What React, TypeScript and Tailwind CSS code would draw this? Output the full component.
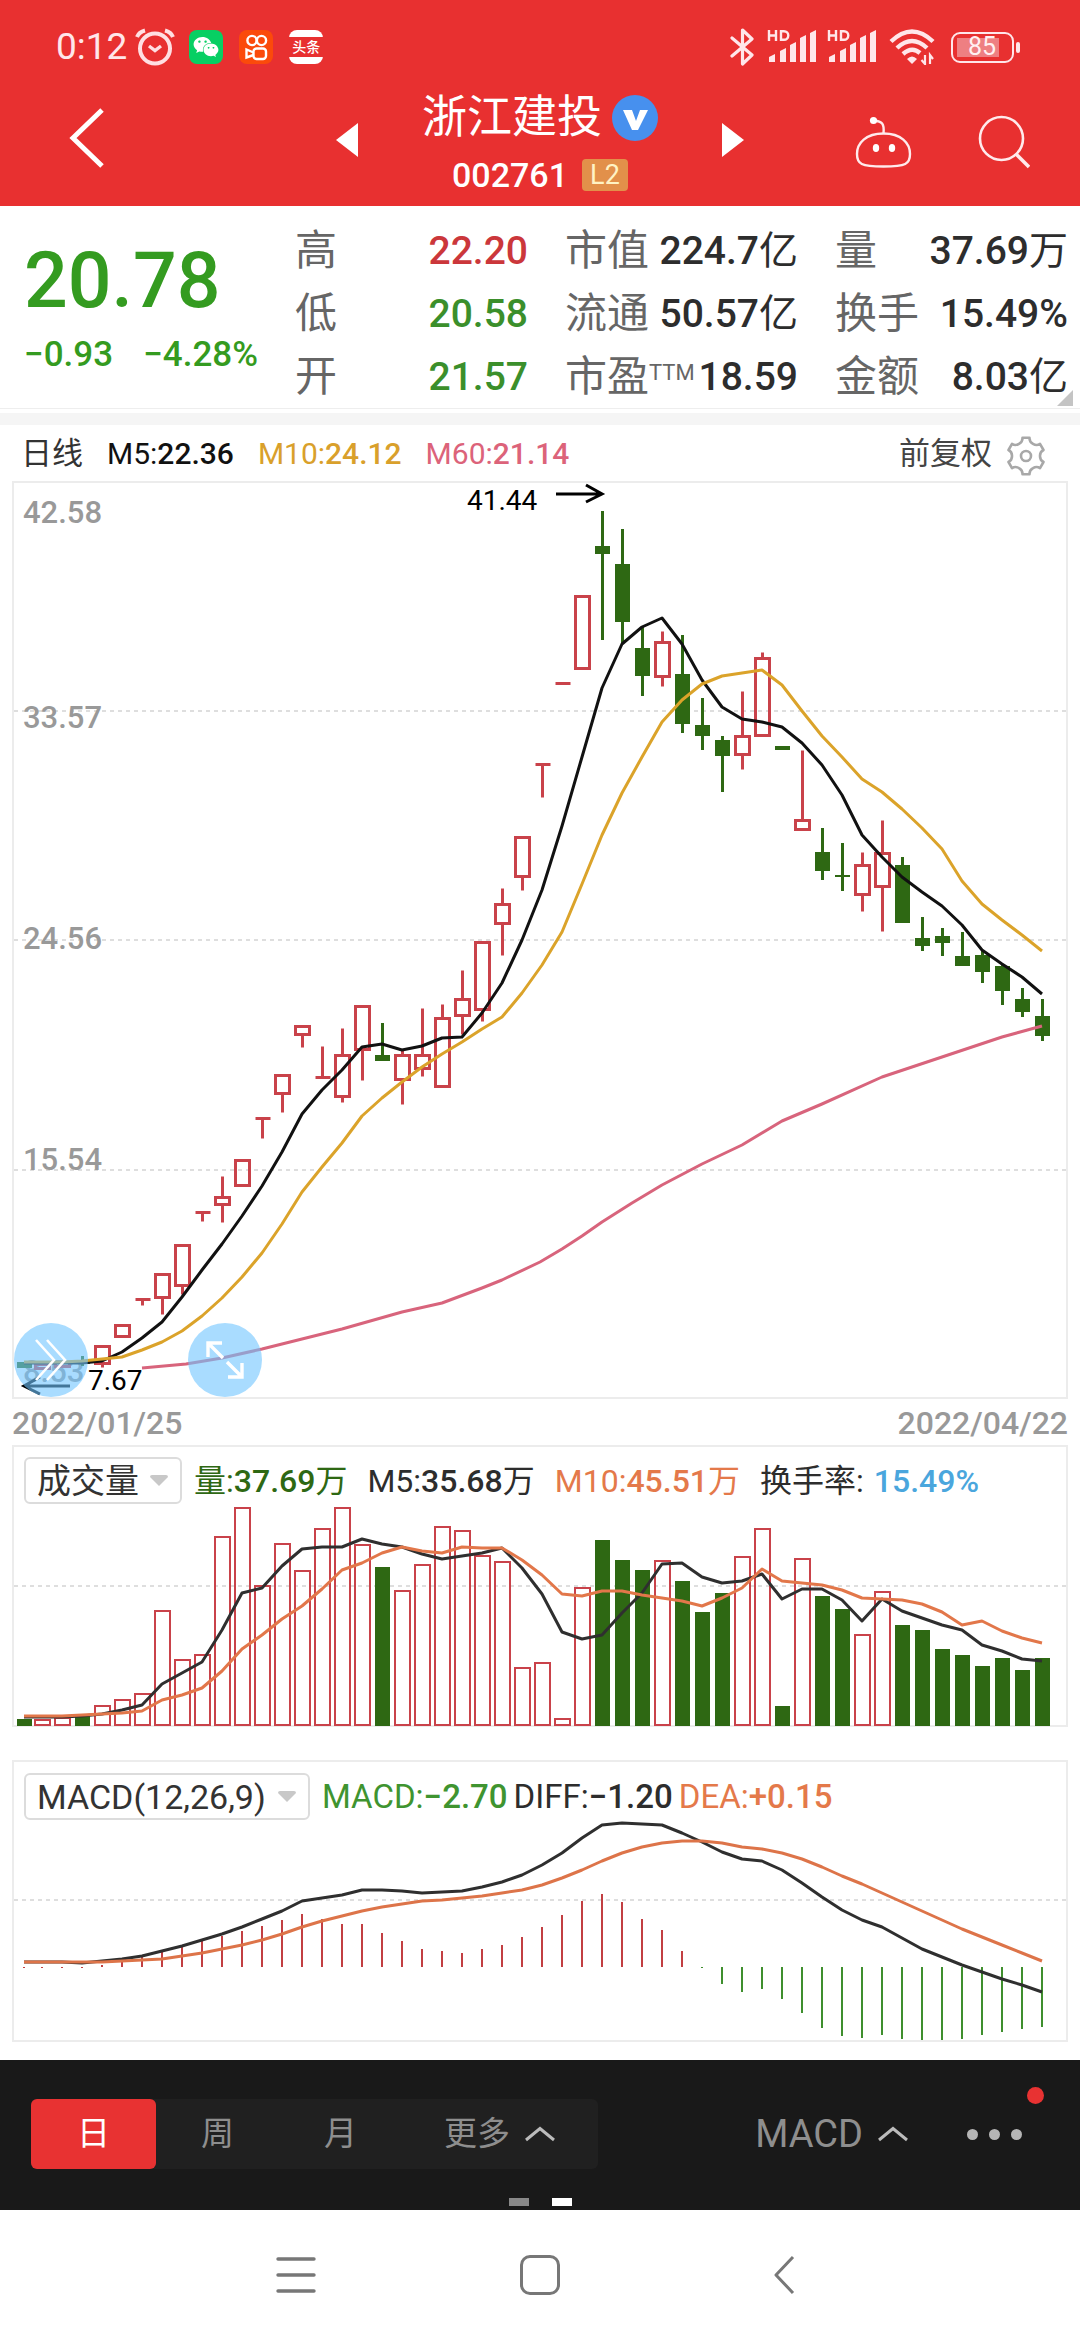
import React from "react";
import { FaWeixin } from "react-icons/fa";

type Candle = [kind: "r" | "g", high: number, top: number, bottom: number, low: number];

const candles: Candle[] = [
  ["g", 1362, 1362, 1368, 1368],
  ["r", 1364, 1364, 1368, 1368],
  ["r", 1361, 1362, 1366, 1367],
  ["g", 1356, 1360, 1364, 1366],
  ["r", 1346, 1346, 1363, 1367],
  ["r", 1325, 1325, 1336, 1336],
  ["r", 1299, 1299, 1299, 1305],
  ["r", 1274, 1274, 1297, 1314],
  ["r", 1245, 1245, 1285, 1294],
  ["r", 1212, 1212, 1212, 1221],
  ["r", 1176, 1197, 1204, 1222],
  ["r", 1160, 1160, 1185, 1185],
  ["r", 1118, 1118, 1118, 1138],
  ["r", 1075, 1075, 1093, 1112],
  ["r", 1026, 1026, 1034, 1047],
  ["r", 1046, 1077, 1078, 1078],
  ["r", 1028, 1055, 1096, 1102],
  ["r", 1006, 1006, 1049, 1080],
  ["g", 1023, 1055, 1061, 1061],
  ["r", 1050, 1055, 1079, 1104],
  ["r", 1008, 1055, 1068, 1076],
  ["r", 1004, 1018, 1086, 1086],
  ["r", 970, 999, 1015, 1034],
  ["r", 942, 942, 1009, 1021],
  ["r", 888, 904, 923, 955],
  ["r", 837, 837, 876, 890],
  ["r", 764, 764, 764, 797],
  ["r", 683, 683, 683, 683],
  ["r", 596, 596, 668, 668],
  ["g", 511, 546, 554, 640],
  ["g", 529, 564, 622, 644],
  ["g", 626, 648, 676, 696],
  ["r", 631, 642, 676, 686],
  ["g", 635, 674, 724, 733],
  ["g", 698, 725, 736, 750],
  ["g", 736, 740, 756, 792],
  ["r", 691, 736, 754, 769],
  ["r", 652, 658, 735, 735],
  ["g", 746, 746, 750, 750],
  ["r", 750, 820, 829, 829],
  ["g", 828, 852, 871, 880],
  ["g", 843, 875, 877, 891],
  ["r", 852, 865, 894, 911],
  ["r", 820, 853, 886, 931],
  ["g", 857, 865, 923, 923],
  ["g", 917, 938, 946, 951],
  ["g", 928, 936, 943, 956],
  ["g", 932, 956, 966, 966],
  ["g", 951, 955, 972, 983],
  ["g", 964, 966, 991, 1005],
  ["g", 988, 999, 1012, 1017],
  ["g", 999, 1016, 1036, 1041],
];

const ma5 = [
  1363, 1363, 1363, 1363, 1361, 1352, 1338, 1322, 1297, 1270, 1244, 1216, 1186, 1152, 1114, 1090, 1070, 1047, 1044,
  1050, 1046, 1038, 1037, 1013, 983, 940, 890, 826, 757, 688, 644, 627, 618, 644, 680, 707, 719, 722, 727, 743, 765,
  795, 835, 857, 877, 892, 906, 925, 950, 964, 977, 994,
];
const ma10 = [
  1362, 1362, 1362, 1361, 1359, 1357, 1350, 1342, 1331, 1316, 1298, 1277, 1253, 1224, 1192, 1167, 1143, 1116, 1098,
  1082, 1067, 1054, 1042, 1029, 1017, 993, 965, 932, 884, 835, 793, 757, 722, 700, 684, 676, 673, 670, 685, 711, 736,
  757, 779, 792, 809, 828, 849, 881, 904, 920, 935, 951,
];
const ma60 =
  "142,1368 186,1364 222,1358 262,1349 302,1339 342,1329 402,1312 442,1303 482,1288 502,1280 540,1262 562,1249 582,1236 602,1222 632,1203 662,1185 702,1164 742,1145 782,1121 822,1104 882,1077 942,1057 1002,1037 1042,1026";

const volumes = [
  1719, 1719, 1717, 1716, 1705, 1699, 1693, 1610, 1659, 1654, 1536, 1507, 1585, 1543, 1570, 1528, 1507, 1544, 1567,
  1590, 1564, 1526, 1530, 1555, 1561, 1667, 1662, 1718, 1587, 1540, 1560, 1570, 1560, 1581, 1612, 1593, 1556, 1528,
  1706, 1558, 1596, 1609, 1634, 1591, 1625, 1630, 1649, 1655, 1666, 1658, 1670, 1658,
];
const volMa5 = [
  1717, 1717, 1717, 1716, 1714, 1710, 1705, 1684, 1673, 1662, 1630, 1593, 1588, 1566, 1549, 1547, 1547, 1539, 1544,
  1547, 1554, 1559, 1556, 1553, 1548, 1568, 1594, 1632, 1639, 1635, 1613, 1593, 1564, 1563, 1577, 1583, 1581, 1574,
  1599, 1589, 1589, 1600, 1621, 1599, 1611, 1618, 1625, 1630, 1645, 1651, 1659, 1661,
];
const volMa10 = [
  1716, 1716, 1716, 1715, 1714, 1713, 1711, 1700, 1695, 1688, 1671, 1649, 1635, 1619, 1606, 1589, 1570, 1563, 1553,
  1547, 1551, 1553, 1547, 1548, 1548, 1560, 1575, 1594, 1596, 1591, 1591, 1595, 1598, 1601, 1606, 1598, 1588, 1569,
  1581, 1583, 1585, 1590, 1598, 1599, 1600, 1604, 1612, 1625, 1621, 1631, 1638, 1643,
];

const macdBars = [
  1968, 1968, 1968, 1968, 1965, 1960, 1957, 1952, 1947, 1940, 1936, 1931, 1926, 1920, 1914, 1919, 1924, 1924, 1933,
  1941, 1949, 1951, 1953, 1949, 1945, 1937, 1927, 1915, 1901, 1894, 1902, 1919, 1930, 1951, 1968, 1984, 1992, 1989,
  1999, 2013, 2028, 2036, 2038, 2035, 2039, 2040, 2040, 2039, 2035, 2032, 2029, 2027,
];
const diff = [
  1962, 1962, 1962, 1963, 1961, 1959, 1956, 1951, 1946, 1940, 1934, 1927, 1919, 1911, 1901, 1898, 1895, 1890, 1890,
  1891, 1893, 1892, 1891, 1887, 1882, 1875, 1865, 1853, 1838, 1825, 1823, 1824, 1825, 1833, 1842, 1852, 1859, 1861,
  1870, 1883, 1897, 1910, 1920, 1927, 1938, 1949, 1957, 1965, 1972, 1979, 1985, 1992,
];
const dea = [
  1962, 1962, 1962, 1962, 1962, 1961, 1960, 1959, 1956, 1953, 1949, 1945, 1940, 1934, 1927, 1921, 1916, 1911, 1907,
  1904, 1901, 1900, 1898, 1896, 1893, 1890, 1885, 1878, 1870, 1861, 1853, 1847, 1843, 1841, 1841, 1843, 1847, 1849,
  1853, 1859, 1867, 1876, 1884, 1893, 1902, 1911, 1920, 1929, 1937, 1945, 1953, 1961,
];

const RED = "#c9424a";
const GREEN = "#2e6813";

const xAt = (i: number) => (i === 0 ? 24 : 22 + 20 * i);
const line = (ys: number[]) => ys.map((y, i) => `${xAt(i)},${y}`).join(" ");

function Grid({ y }: { y: number }) {
  return <path d={`M14 ${y}H1066`} stroke="#dedede" strokeWidth="2" strokeDasharray="4 4" />;
}

function CandleShape({ c, i }: { c: Candle; i: number }) {
  const [kind, high, top, bottom, low] = c;
  const x = xAt(i);
  if (kind === "g") {
    return (
      <g fill={GREEN}>
        <rect x={x - 1} y={high} width="3" height={low - high} />
        <rect x={x - 7} y={top} width="15" height={bottom - top} />
      </g>
    );
  }
  return (
    <g stroke={RED} strokeWidth="3" fill="none" transform="translate(0.5 0.5)">
      {high < top && <path d={`M${x} ${high}V${top}`} />}
      {low > bottom && <path d={`M${x} ${bottom}V${low}`} />}
      {bottom - top < 3 ? (
        <path d={`M${x - 7} ${top}H${x + 8}`} />
      ) : (
        <rect x={x - 7} y={top} width="14" height={bottom - top} />
      )}
    </g>
  );
}

function PriceChart() {
  return (
    <svg viewBox="14 483 1052 914" className="block w-full overflow-visible" role="img" aria-label="日线">
      <Grid y={711} />
      <Grid y={940} />
      <Grid y={1170} />
      <g className="font-['Roboto'] text-[31px] font-medium" fill="#999">
        <text x="23" y="523">42.58</text>
        <text x="23" y="728">33.57</text>
        <text x="23" y="949">24.56</text>
        <text x="23" y="1170">15.54</text>
        <text x="23" y="1382">8.53</text>
      </g>
      {candles.map((c, i) => (
        <CandleShape key={i} c={c} i={i} />
      ))}
      <g fill="none" strokeWidth="3" strokeLinejoin="round">
        <polyline points={ma60} stroke="#d8647c" />
        <polyline points={line(ma5)} stroke="#111" />
        <polyline points={line(ma10)} stroke="#dba32a" />
      </g>
      <g className="font-['Roboto'] text-[28px]" fill="#000">
        <text x="467" y="510">41.44</text>
        <text x="88" y="1390">7.67</text>
      </g>
      <g fill="none" stroke="#000" strokeWidth="3">
        <path d="M556 494H602M586 485L602 494L586 502" />
        <path d="M70 1386H24M40 1377L24 1386L40 1394" />
      </g>
    </svg>
  );
}

function VolumeChart() {
  return (
    <svg viewBox="14 1504 1052 221" className="block w-full overflow-visible" role="img" aria-label="成交量">
      <Grid y={1586} />
      {volumes.map((top, i) =>
        candles[i][0] === "g" ? (
          <rect key={i} x={xAt(i) - 7} y={top} width="15" height={1726 - top} fill={GREEN} />
        ) : (
          <rect
            key={i}
            x={xAt(i) - 7}
            y={top + 1}
            width="15"
            height={1724 - top}
            fill="none"
            stroke={RED}
            strokeWidth="2"
          />
        ),
      )}
      <g fill="none" strokeWidth="3" strokeLinejoin="round">
        <polyline points={line(volMa5)} stroke="#2f2f2f" />
        <polyline points={line(volMa10)} stroke="#e2774a" />
      </g>
    </svg>
  );
}

function MacdChart() {
  return (
    <svg viewBox="14 1821 1052 219" className="block w-full" role="img" aria-label="MACD">
      <Grid y={1900} />
      {macdBars.map((y, i) => (
        <path key={i} d={`M${xAt(i)} 1967V${y}`} stroke={i < 34 ? "#c23f42" : "#3f8f2e"} strokeWidth="2" />
      ))}
      <g fill="none" strokeWidth="3" strokeLinejoin="round">
        <polyline points={line(diff)} stroke="#2f2f2f" />
        <polyline points={line(dea)} stroke="#dd7449" />
      </g>
    </svg>
  );
}

function Signal() {
  return (
    <svg width="50" height="34" viewBox="0 0 50 34" fill="#ffe6ea" aria-hidden="true">
      <path d="M2 0V11M2 5.500H9M9 0V11" stroke="#ffe6ea" strokeWidth="2.400" />
      <path d="M14 1.200V9.800H17A4.300 4.300 0 0 0 17 1.200Z" fill="none" stroke="#ffe6ea" strokeWidth="2.400" />
      <path d="M2 32V27L8 24V32Z" />
      <path d="M13 32V21L19 18V32Z" />
      <path d="M23 32V15L29 12V32Z" />
      <path d="M33 32V8L39 5V32Z" />
      <path d="M43 32V3L49 0V32Z" />
    </svg>
  );
}

function StatusBar() {
  return (
    <div className="flex h-[66px] items-center justify-between pt-7 pl-14 pr-[60px] text-white">
      <div className="flex items-center">
        <span className="text-[37px] leading-9 text-[#ffe6ea]">0:12</span>
        <svg className="ml-2" width="40" height="38" viewBox="0 0 40 38" fill="none" stroke="#ffdfe2" strokeWidth="4" aria-hidden="true">
          <circle cx="20" cy="20.500" r="15" />
          <path d="M14 18L20 22.500L26 18" strokeWidth="3.400" />
          <path d="M2 9Q4 4 10 2.500M38 9Q36 4 30 2.500" />
        </svg>
        <span className="ml-3.5 flex size-[34px] items-center justify-center rounded-lg bg-[#07cf63]">
          <FaWeixin className="size-[26px]" />
        </span>
        <span className="ml-4 flex size-[34px] items-center justify-center rounded-lg bg-[#fb4a0b]">
          <svg width="24" height="27" viewBox="0 0 24 27" fill="none" stroke="#fff" strokeWidth="2.400" aria-hidden="true">
            <circle cx="8" cy="6.500" r="4.600" />
            <circle cx="17.500" cy="6.500" r="4.600" />
            <rect x="9.500" y="14.500" width="12.500" height="10.500" rx="3" />
            <path d="M9.500 18.500L2.500 15.500V23.500L9.500 21" />
          </svg>
        </span>
        <span className="ml-4 flex h-[34px] w-[34px] flex-col items-center justify-between overflow-hidden rounded-lg">
          <span className="h-[7px] w-full bg-white" />
          <span className="text-[14px] leading-[14px] font-medium">头条</span>
          <span className="h-[7px] w-full bg-white" />
        </span>
      </div>
      <div className="flex items-center">
        <svg width="25" height="40" viewBox="0 0 25 40" fill="none" stroke="#ffe6ea" strokeWidth="3.200" strokeLinejoin="round" strokeLinecap="round" aria-hidden="true">
          <path d="M2 11L22 28L12.500 37V3L22 12L2 29" />
        </svg>
        <span className="ml-3">
          <Signal />
        </span>
        <span className="ml-2.5">
          <Signal />
        </span>
        <svg className="ml-3" width="46" height="36" viewBox="0 0 46 36" fill="none" stroke="#ffe6ea" strokeWidth="4.400" aria-hidden="true">
          <path d="M2 12.500Q23 -7.500 44 12.500" />
          <path d="M8 19Q23 5 38 19" />
          <path d="M14 25Q23 17 31 24" />
          <path d="M18 30Q23 25 28 30L23 35Z" fill="#ffe6ea" stroke="none" />
          <path d="M36 26V35L32.500 31M41 35V26L44 30" strokeWidth="2.200" />
        </svg>
        <span className="ml-4 flex h-[31px] w-[63px] rounded-[9px] border-2 border-[#ffe6ea] p-1">
          <span className="flex h-full w-[42px] items-center justify-center bg-[#ee7f82]">
            <span className="pl-2 text-[25px] leading-6 text-[#fff0f2]">85</span>
          </span>
        </span>
        <span className="ml-0.5 h-[11px] w-1 rounded-sm bg-[#ffe6ea]" />
      </div>
    </div>
  );
}

function TitleBar() {
  return (
    <div className="grid h-[140px] grid-cols-[1fr_auto_1fr] items-center pt-1 text-white">
      <div className="pl-[68px]">
        <button type="button" aria-label="返回" className="block">
          <svg width="38" height="60" viewBox="0 0 38 60" fill="none" stroke="#fff" strokeWidth="5">
            <path d="M34 2L5 30L34 58" />
          </svg>
        </button>
      </div>
      <div className="flex w-[408px] items-center justify-between pt-1">
        <button type="button" aria-label="上一只" className="block">
          <svg width="22" height="34" viewBox="0 0 22 34" fill="#fff">
            <path d="M22 0V34L0 17Z" />
          </svg>
        </button>
        <div className="flex flex-col items-center gap-4 pt-1">
          <h1 className="flex items-center gap-2.5 text-[45px] leading-[50px]">
            浙江建投
            <svg width="46" height="46" viewBox="0 0 46 46" aria-label="认证">
              <circle cx="23" cy="23" r="23" fill="#4790ee" />
              <path d="M11 15H20L24 26L28 15H36L26 35H20Z" fill="#fff" />
            </svg>
          </h1>
          <p className="flex items-center gap-3.5 text-[34px] leading-8 font-medium">
            002761
            <span className="flex h-8 w-[46px] items-center justify-center rounded-sm bg-[#e2904a] text-[27px] leading-8 font-normal text-[#fff3c4]">
              L2
            </span>
          </p>
        </div>
        <button type="button" aria-label="下一只" className="block">
          <svg width="22" height="34" viewBox="0 0 22 34" fill="#fff">
            <path d="M0 0V34L22 17Z" />
          </svg>
        </button>
      </div>
      <div className="flex items-center justify-end gap-[66px] pt-2 pr-[50px]">
        <button type="button" aria-label="智能助手">
          <svg className="block" width="57" height="54" viewBox="0 0 57 54" fill="none" stroke="#ffeaec" strokeWidth="2.400">
            <path d="M28.500 18.500C46 18.500 55 28 55 39C55 49 51 51.500 28.500 51.500C6 51.500 2 49 2 39C2 28 11 18.500 28.500 18.500Z" />
            <path d="M28.500 18.500C29.500 8 27 6.500 19 5.500" />
            <circle cx="18.500" cy="5.500" r="3.600" fill="#fff" stroke="none" />
            <ellipse cx="21" cy="33" rx="3.200" ry="4" fill="#fff" stroke="none" />
            <ellipse cx="37" cy="33" rx="3.200" ry="4" fill="#fff" stroke="none" />
          </svg>
        </button>
        <button type="button" aria-label="搜索">
          <svg className="block" width="52" height="54" viewBox="0 0 52 54" fill="none" stroke="#ffeaec" strokeWidth="2.600">
            <circle cx="23.500" cy="23.500" r="21.500" />
            <path d="M38 39L51 52" strokeWidth="3.600" />
          </svg>
        </button>
      </div>
    </div>
  );
}

function Value({ children, className }: { children: string; className: string }) {
  const unit = /[万亿]$/.test(children) ? children.slice(-1) : "";
  const digits = unit ? children.slice(0, -1) : children;
  return (
    <dd className={className}>
      <span className="font-medium">{digits}</span>
      {unit}
    </dd>
  );
}

const quoteColumns = [
  [
    { label: "高", value: "22.20", color: "text-[#cb373b]" },
    { label: "低", value: "20.58", color: "text-[#3b8f2b]" },
    { label: "开", value: "21.57", color: "text-[#3b8f2b]" },
  ],
  [
    { label: "市值", value: "224.7亿", color: "text-[#2d2d2d]" },
    { label: "流通", value: "50.57亿", color: "text-[#2d2d2d]" },
    { label: "市盈", sup: "TTM", value: "18.59", color: "text-[#2d2d2d]" },
  ],
  [
    { label: "量", value: "37.69万", color: "text-[#2d2d2d]" },
    { label: "换手", value: "15.49%", color: "text-[#2d2d2d]" },
    { label: "金额", value: "8.03亿", color: "text-[#2d2d2d]" },
  ],
];

function Quote() {
  return (
    <section className="relative grid grid-cols-[234px_1fr_1fr_1fr] gap-x-[37px] border-b border-[#eee] pt-[13px] pr-3 pl-6">
      <div className="flex flex-col pt-[22px] text-[#349b20]">
        <span className="text-[77px] leading-[80px] font-medium">20.78</span>
        <span className="flex items-center justify-between pt-3 text-[35px] leading-[44px] font-medium">
          <span>−0.93</span>
          <span>−4.28%</span>
        </span>
      </div>
      {quoteColumns.map((rows, i) => (
        <dl key={i}>
          {rows.map((row) => (
            <div key={row.label} className="flex h-[63px] items-center justify-between leading-[48px] whitespace-nowrap">
              <dt className="text-[42px] text-[#666]">
                {row.label}
                {"sup" in row && <sup className="text-[22px] leading-none">{row.sup}</sup>}
              </dt>
              <Value className={`text-[39px] ${row.color}`}>{row.value}</Value>
            </div>
          ))}
        </dl>
      ))}
      <svg className="absolute right-[7px] bottom-0.5" width="16" height="16" viewBox="0 0 16 16" fill="#c4c4c4" aria-hidden="true">
        <path d="M16 0V16H0Z" />
      </svg>
    </section>
  );
}

function gearPath() {
  const at = (r: number, deg: number) => {
    const a = (deg * Math.PI) / 180;
    return `${(20 + r * Math.cos(a)).toFixed(1)} ${(20 + r * Math.sin(a)).toFixed(1)}`;
  };
  const parts: string[] = [];
  for (let k = 0; k < 6; k++) {
    const a = 60 * k - 90;
    parts.push(`${k === 0 ? "M" : "L"}${at(18.5, a - 11)}L${at(18.5, a + 11)}Q${at(14.5, a + 13)} ${at(14, a + 30)}Q${at(14.5, a + 47)} ${at(18.5, a + 49)}`);
  }
  return parts.join("") + "Z";
}

function Tag({ name, value, unit, className }: { name: string; value: string; unit?: string; className: string }) {
  return (
    <span className={className}>
      {name}:<span className="font-medium">{value}</span>
      {unit}
    </span>
  );
}

function AverageRow() {
  return (
    <div className="flex h-14 items-center justify-between pt-0.5 pr-[34px] pl-[21px] text-[31px] leading-10 whitespace-nowrap">
      <div className="flex items-center gap-6">
        <span className="text-[#333]">日线</span>
        <span className="flex items-center gap-6 text-[30px]">
          <Tag name="M5" value="22.36" className="text-[#111]" />
          <Tag name="M10" value="24.12" className="text-[#d9a02b]" />
          <Tag name="M60" value="21.14" className="text-[#dc637a]" />
        </span>
      </div>
      <div className="flex items-center gap-3.5">
        <button type="button" className="text-[#444]">前复权</button>
        <button type="button" aria-label="设置">
          <svg className="mt-1 block" width="40" height="40" viewBox="0 0 40 40" fill="none" stroke="#a8a8a8" strokeWidth="2.600" strokeLinejoin="round">
            <path d={gearPath()} />
            <circle cx="20" cy="20" r="5" />
          </svg>
        </button>
      </div>
    </div>
  );
}

function IndicatorSelect({ value, label, className }: { value: string; label: string; className: string }) {
  return (
    <div className="relative flex items-center">
      <select
        aria-label={label}
        className={`h-[47px] appearance-none rounded-md border-2 border-[#dcdcdc] bg-white pl-[11px] text-[34px] leading-10 text-[#333] ${className}`}
      >
        <option>{value}</option>
      </select>
      <svg className="pointer-events-none absolute right-3.5" width="18" height="11" viewBox="0 0 18 11" fill="#c8c8c8" aria-hidden="true">
        <path d="M0 2Q0 0 2 0H16Q18 0 18 2L9 11Z" />
      </svg>
    </div>
  );
}

function BottomBar() {
  const chevron = (
    <svg width="32" height="16" viewBox="0 0 32 16" fill="none" stroke="#bbb" strokeWidth="3" aria-hidden="true">
      <path d="M2 14L16 2.500L30 14" />
    </svg>
  );
  return (
    <section className="relative flex h-[150px] flex-col bg-[#191919] pt-[39px] text-[33px] leading-10 text-[#8e8e8e]">
      <div className="flex h-[70px] items-center justify-between pr-[58px] pl-[31px]">
        <div className="flex h-full rounded-md bg-[#202020]">
          <button type="button" className="h-full w-[125px] rounded-md bg-[#e83232] text-white">日</button>
          <button type="button" className="h-full w-[123px]">周</button>
          <button type="button" className="h-full w-[123px]">月</button>
          <button type="button" className="flex h-full w-[196px] items-center justify-center gap-3.5">
            更多
            {chevron}
          </button>
        </div>
        <div className="flex items-center gap-[58px]">
          <button type="button" className="flex items-center gap-3.5 text-[38px]">
            MACD
            {chevron}
          </button>
          <button type="button" aria-label="更多选项" className="flex items-center gap-[11px]">
            <span className="size-[11px] rounded-full bg-[#b5b5b5]" />
            <span className="size-[11px] rounded-full bg-[#b5b5b5]" />
            <span className="size-[11px] rounded-full bg-[#b5b5b5]" />
          </button>
        </div>
      </div>
      <div className="mt-[29px] flex justify-center gap-[23px]">
        <span className="h-2 w-5 bg-[#888]" />
        <span className="h-2 w-5 bg-white" />
      </div>
      <span className="absolute top-[27px] right-9 size-[17px] rounded-full bg-[#e83232]" />
    </section>
  );
}

function SystemNav() {
  return (
    <nav className="flex h-[130px] justify-center bg-white">
      <button type="button" aria-label="最近任务" className="flex w-[244px] items-center justify-center">
        <svg width="40" height="38" viewBox="0 0 40 38" stroke="#777" strokeWidth="3.400" strokeLinecap="round">
          <path d="M2 3H38M2 19H38M2 35H38" />
        </svg>
      </button>
      <button type="button" aria-label="主屏幕" className="flex w-[244px] items-center justify-center">
        <span className="size-10 rounded-[10px] border-[3px] border-[#777]" />
      </button>
      <button type="button" aria-label="返回上级" className="flex w-[244px] items-center justify-center">
        <svg width="22" height="40" viewBox="0 0 22 40" fill="none" stroke="#777" strokeWidth="3" strokeLinejoin="round">
          <path d="M20 2L3 20L20 38" />
        </svg>
      </button>
    </nav>
  );
}

export default function App() {
  return (
    <div className="bg-white font-['Roboto','Noto_Sans_CJK_SC',sans-serif]">
      <header className="bg-[#e83030]">
        <StatusBar />
        <TitleBar />
      </header>
      <main>
        <Quote />
        <div className="mt-1 h-3 bg-[#f5f5f5]" />
        <AverageRow />
        <section className="relative mx-3 border-2 border-[#ececec]">
          <PriceChart />
          <button type="button" aria-label="展开" className="absolute bottom-0 left-0 flex size-[74px] items-center justify-center rounded-full bg-[#6fc4ff]/60">
            <svg width="36" height="42" viewBox="0 0 36 42" fill="none" stroke="#fff" strokeWidth="2.600">
              <path d="M3 1L21 21L3 41M14 1L32 21L14 41" />
            </svg>
          </button>
          <button type="button" aria-label="全屏" className="absolute bottom-0 left-[174px] flex size-[74px] items-center justify-center rounded-full bg-[#6fc4ff]/60">
            <svg width="38" height="38" viewBox="0 0 38 38" fill="none" stroke="#fff" strokeWidth="3.400">
              <path d="M16 2H2V16M2 2L17 17M22 36H36V22M36 36L21 21" />
            </svg>
          </button>
        </section>
        <div className="flex h-[46px] items-center justify-between px-3 pt-0.5 text-[32px] leading-10 font-medium text-[#999]">
          <time>2022/01/25</time>
          <time>2022/04/22</time>
        </div>
        <section className="mx-3 border-2 border-[#ececec]">
          <div className="flex h-[57px] items-center gap-5 pt-2.5 pl-2.5 text-[32px] leading-10 whitespace-nowrap">
            <div className="-mr-2">
              <IndicatorSelect label="副图指标一" value="成交量" className="w-[158px]" />
            </div>
            <Tag name="量" value="37.69" unit="万" className="text-[#2e6813]" />
            <Tag name="M5" value="35.68" unit="万" className="text-[#2d2d2d]" />
            <Tag name="M10" value="45.51" unit="万" className="text-[#e4794a]" />
            <span className="text-[#2d2d2d]">
              换手率:<span className="pl-2.5 font-medium text-[#4aa6dd]">15.49%</span>
            </span>
          </div>
          <VolumeChart />
        </section>
        <section className="mx-3 mt-[33px] mb-[18px] border-2 border-[#ececec]">
          <div className="flex h-[59px] items-center gap-1.5 pt-2.5 pl-2.5 text-[33px] leading-10 whitespace-nowrap">
            <div className="mr-1.5">
              <IndicatorSelect label="副图指标二" value="MACD(12,26,9)" className="w-[286px]" />
            </div>
            <Tag name="MACD" value="−2.70" className="text-[#3f9430]" />
            <Tag name="DIFF" value="−1.20" className="text-[#2d2d2d]" />
            <Tag name="DEA" value="+0.15" className="text-[#e4794a]" />
          </div>
          <MacdChart />
        </section>
      </main>
      <BottomBar />
      <SystemNav />
    </div>
  );
}
